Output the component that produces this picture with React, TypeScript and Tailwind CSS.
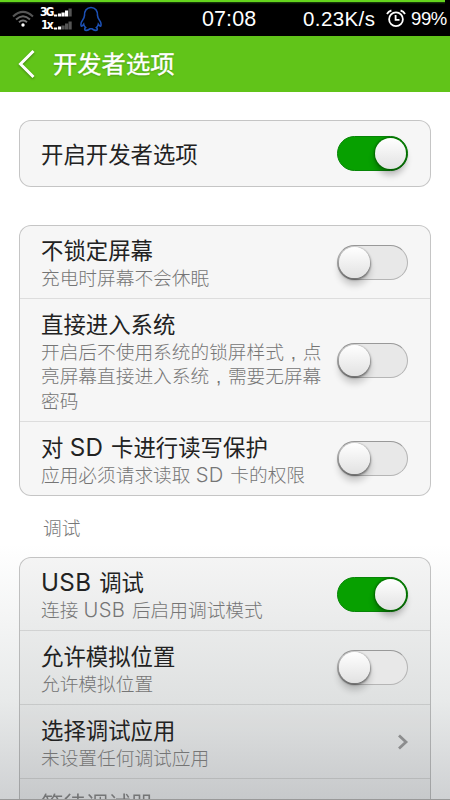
import clsx from "clsx";
import type { ReactNode } from "react";

type Row = {
  title: ReactNode;
  summary?: ReactNode;
  control?: "on" | "off" | "link";
  height: string;
  disabled?: boolean;
};

const generalRows: Row[] = [
  { title: "不锁定屏幕", summary: "充电时屏幕不会休眠", control: "off", height: "h-[73px]" },
  {
    title: "直接进入系统",
    summary: (
      <>
        开启后不使用系统的锁屏样式<Comma />点
        <br />
        亮屏幕直接进入系统<Comma />需要无屏幕
        <br />
        密码
      </>
    ),
    control: "off",
    height: "h-[123px]",
  },
  {
    title: <>对 <Latin>SD</Latin> 卡进行读写保护</>,
    summary: <>应用必须请求读取 <Latin>SD</Latin> 卡的权限</>,
    control: "off",
    height: "h-[73px]",
  },
];

const debugRows: Row[] = [
  {
    title: <><Latin>USB</Latin> 调试</>,
    summary: <>连接 <Latin>USB</Latin> 后启用调试模式</>,
    control: "on",
    height: "h-[73px]",
  },
  { title: "允许模拟位置", summary: "允许模拟位置", control: "off", height: "h-[74px]" },
  { title: "选择调试应用", summary: "未设置任何调试应用", control: "link", height: "h-[74px]" },
  { title: "等待调试器", height: "h-[74px]", disabled: true },
];

// Comma centred in a full-width cell
function Comma() {
  return <span className="inline-block w-[1em] text-center leading-none">,</span>;
}

function Latin({ children }: { children: ReactNode }) {
  return <span className="mr-[1.5px] font-['Inter',sans-serif] text-[1.08em] leading-none tracking-[0.015em]">{children}</span>;
}

function Toggle({ on }: { on: boolean }) {
  return (
    <div
      className={clsx(
        "flex h-[35px] w-[71px] shrink-0 items-center rounded-full border px-px",
        on
          ? "justify-end border-[#078507] bg-[#07a000]"
          : "justify-start border-[#b5b5b5] border-t-[#999] bg-[#e8e8e8]"
      )}
    >
      <div
        className={clsx(
          "size-[31px] rounded-full bg-linear-to-b from-white to-[#e2e2e2]",
          on
            ? "shadow-[0_0_2px_1px_rgba(0,50,0,0.55),0_6px_6px_rgba(0,0,0,0.25)]"
            : "shadow-[0_1px_2px_1px_rgba(0,0,0,0.4),0_7px_7px_rgba(0,0,0,0.2)]"
        )}
      />
    </div>
  );
}

function SettingRow({ row }: { row: Row }) {
  return (
    <div
      className={clsx(
        "flex justify-between border-b border-black/10 pr-[22px] pl-[21px] last:border-b-0",
        row.disabled ? "items-start pt-3" : "items-center",
        row.height
      )}
    >
      <div
        className={clsx(
          "whitespace-nowrap",
          row.disabled ? "opacity-50" : "pt-[5px]"
        )}
      >
        <div className="text-[22.4px] leading-[30px] text-[#222]">{row.title}</div>
        {row.summary && (
          <div className="text-[18.7px] leading-[24.5px] font-light text-[#757575]">{row.summary}</div>
        )}
      </div>
      {row.control === "link" && (
        <svg width="12" height="18" viewBox="0 0 12 18" className="-mr-px" fill="none" stroke="#8c8d8e" strokeWidth="2.8">
          <path d="M2 2.5 9 9 2 15.5" />
        </svg>
      )}
      {(row.control === "on" || row.control === "off") && <Toggle on={row.control === "on"} />}
    </div>
  );
}

function Card({ children, className }: { children: ReactNode; className?: string }) {
  return (
    <section className={clsx("rounded-xl border border-black/20 bg-black/[0.035]", className)}>{children}</section>
  );
}

function StatusBar() {
  return (
    <div className="flex h-9 shrink-0 flex-col bg-black font-['Liberation_Sans',Arial,sans-serif] text-white">
      {/* battery level strip */}
      <div className="h-[5px] w-[445px] shrink-0 bg-linear-to-b from-[#65d51d] from-40% via-[#17340a] via-50% to-black" />
      <div className="flex h-[28px] items-center">
        <svg width="22" height="18" viewBox="0 0 22 18" className="ml-3 shrink-0" fill="none" strokeWidth="2">
          <path d="M1 6.5Q11-2.8 21 6.5" stroke="#555" />
          <path d="M4 9.5Q11 3 18 9.5" stroke="#666" />
          <path d="M7 12.3Q11 8.8 15 12.3" stroke="#777" />
          <circle cx="11" cy="15" r="1.7" fill="#fff" />
        </svg>
        <div className="ml-[6px] flex w-[32px] shrink-0 flex-col font-['DejaVu_Sans_Condensed','DejaVu_Sans',sans-serif] text-[12px] leading-[13px] font-bold">
          <div className="flex items-center">
            <span className="w-[14px] tracking-[-2px]">3G</span>
            <Signal level={4} />
          </div>
          <div className="flex items-center">
            <span className="w-[14px] pl-px tracking-[-1.8px]">1x</span>
            <Signal level={2} />
          </div>
        </div>
        <svg width="22" height="26" viewBox="0 0 22 26" className="ml-2 shrink-0" fill="none" stroke="#1c50b4" strokeWidth="1.6">
          <path d="M11 1.5C6.6 1.5 4.3 5 4.5 9.5C4.5 11.5 3.2 13.2 1.8 15.4C.6 17.5.8 20 1.5 20.3C2.3 20.4 3.2 19 3.7 18.3C4 19.7 4.8 20.7 5.6 21.5C4.4 22.3 4.2 24.3 6 24.4C8 24.5 9 23.4 10 22.8H12C13 23.4 14 24.5 16 24.4C17.8 24.3 17.6 22.3 16.4 21.5C17.2 20.7 18 19.7 18.3 18.3C18.8 19 19.7 20.4 20.5 20.3C21.2 20 21.4 17.5 20.2 15.4C18.8 13.2 17.5 11.5 17.5 9.5C17.7 5 15.4 1.5 11 1.5Z" />
        </svg>
        <span className="ml-[100px] w-[56px] shrink-0 text-[21.5px] tracking-[0.1px]">07:08</span>
        <span className="ml-[45px] w-[74px] shrink-0 text-[20.5px] tracking-[0.4px]">0.23K/s</span>
        <svg width="20" height="20" viewBox="0 0 20 20" className="ml-[9px] shrink-0" fill="none" stroke="#fff" strokeWidth="1.8">
          <circle cx="10" cy="10.3" r="6.9" />
          <path d="M9.6 6v4.8H13.5M1 5Q2.4 2.2 5.4 1.5M19 5Q17.6 2.2 14.6 1.5" />
        </svg>
        <span className="ml-[5px] text-[18.5px] tracking-[-0.4px]">99%</span>
      </div>
    </div>
  );
}

// Five stepped bars, dimmed above the current level
function Signal({ level }: { level: number }) {
  const bars = [
    [0, 2],
    [4, 3],
    [7.5, 4],
    [11, 6],
    [14.5, 8],
  ];
  return (
    <svg width="18" height="9" viewBox="0 0 18 9" className="shrink-0">
      {bars.map(([x, h], i) => (
        <rect key={x} x={x} y={8.5 - h} width="3.2" height={h} fill={i < level ? "#fff" : "#555"} />
      ))}
    </svg>
  );
}

export default function App() {
  return (
    <div className="flex h-[800px] w-[450px] flex-col overflow-hidden bg-white font-['Liberation_Sans','Noto_Sans_CJK_SC',sans-serif]">
      <StatusBar />
      <header className="flex h-14 shrink-0 items-center bg-[#61c419] text-white">
        <svg width="20" height="32" viewBox="0 0 20 32" className="ml-[17px] drop-shadow-[0_1px_1px_rgba(0,0,0,0.35)]" fill="none" stroke="#fff" strokeWidth="3">
          <path d="M16.5 3 3.5 16 16.5 29" />
        </svg>
        <h1 className="ml-4 pt-px text-[24.3px] leading-8 font-normal [-webkit-text-stroke:0.4px_white] [text-shadow:0_1px_2px_rgba(0,0,0,0.25)]">
          开发者选项
        </h1>
      </header>

      <main className="flex-1 overflow-hidden border-b border-[#999] bg-linear-to-b from-white from-[64%] via-[#e8eaea] via-[86%] to-[#cfd1d3] px-[19px] pt-7">
        <Card>
          <SettingRow row={{ title: "开启开发者选项", control: "on", height: "h-[65px]" }} />
        </Card>

        <Card className="mt-[38px]">
          {generalRows.map((row, i) => (
            <SettingRow key={i} row={row} />
          ))}
        </Card>

        <h2 className="mt-[17px] mb-3 pl-6 text-[18.7px] leading-8 font-light text-[#777]">调试</h2>

        <Card>
          {debugRows.map((row, i) => (
            <SettingRow key={i} row={row} />
          ))}
        </Card>
      </main>
    </div>
  );
}
